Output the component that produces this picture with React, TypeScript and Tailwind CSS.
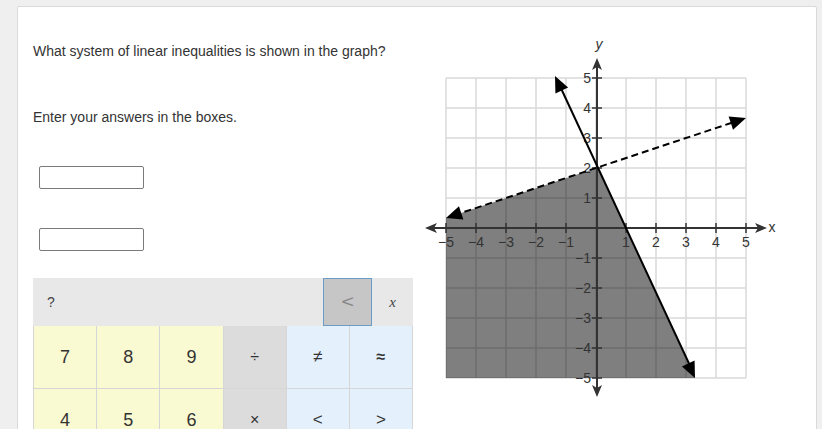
import React from "react";

const font = { fontFamily: '"Liberation Sans", Arial, sans-serif' };

// triangle arrowhead pointing at (tx, ty), coming from (fx, fy)
const head = (tx: number, ty: number, fx: number, fy: number, len: number, half: number, notch = 0) => {
  const dx = tx - fx;
  const dy = ty - fy;
  const d = Math.hypot(dx, dy);
  const ux = dx / d;
  const uy = dy / d;
  const bx = tx - ux * len;
  const by = ty - uy * len;
  const px = -uy;
  const py = ux;
  const nx = tx - ux * (len - notch);
  const ny = ty - uy * (len - notch);
  return `${tx},${ty} ${bx + px * half},${by + py * half} ${nx},${ny} ${bx - px * half},${by - py * half}`;
};

const Graph = () => {
  const xs = Array.from({ length: 11 }, (_, i) => 446 + i * 30);
  const ys = Array.from({ length: 11 }, (_, i) => 78 + i * 30);
  const ticks = [-5, -4, -3, -2, -1, 1, 2, 3, 4, 5];
  return (
    <svg width={380} height={399} viewBox="420 30 380 399" className="block" style={font}>
      {xs.map((x) => (
        <line key={"gx" + x} x1={x} y1={78} x2={x} y2={378} stroke="#d9d9d9" strokeWidth={1.5} />
      ))}
      {ys.map((y) => (
        <line key={"gy" + y} x1={446} y1={y} x2={746} y2={y} stroke="#d9d9d9" strokeWidth={1.5} />
      ))}
      <polygon points="446,218 598,167.5 695,378 446,378" fill="#000" fillOpacity={0.5} />

      {/* axes */}
      <line x1={432} y1={228} x2={760} y2={228} stroke="#333" strokeWidth={2} />
      <line x1={597} y1={64} x2={597} y2={391} stroke="#333" strokeWidth={2} />
      <polygon points={head(425, 228, 440, 228, 12, 5, 3)} fill="#333" />
      <polygon points={head(767, 228, 750, 228, 12, 5, 3)} fill="#333" />
      <polygon points={head(597, 58, 597, 75, 12, 5, 3)} fill="#333" />
      <polygon points={head(597, 397, 597, 380, 12, 5, 3)} fill="#333" />

      {ticks.map((t) => (
        <g key={"t" + t}>
          <line x1={596 + t * 30} y1={223} x2={596 + t * 30} y2={233} stroke="#333" strokeWidth={1.5} />
          <text x={596 + t * 30} y={247} fontSize={14} fill="#333" textAnchor="middle">
            {t < 0 ? "\u2212" + -t : t}
          </text>
          <line x1={592} y1={228 - t * 30} x2={602} y2={228 - t * 30} stroke="#333" strokeWidth={1.5} />
          <text x={591} y={228 - t * 30 + 5} fontSize={14} fill="#333" textAnchor="end">
            {t < 0 ? "\u2212" + -t : t}
          </text>
        </g>
      ))}
      <text x={599} y={49} fontSize={14} fill="#333" textAnchor="middle" fontStyle="italic">
        y
      </text>
      <text x={772} y={232} fontSize={14} fill="#333" textAnchor="middle">
        x
      </text>

      {/* solid boundary */}
      <line x1={559} y1={84} x2={692} y2={370} stroke="#000" strokeWidth={2} />
      <polygon points={head(555, 76, 562, 91, 16, 7)} fill="#000" />
      <polygon points={head(695, 378, 688, 363, 16, 7)} fill="#000" />

      {/* dashed boundary */}
      <line x1={454} y1={215.3} x2={738} y2={120.7} stroke="#000" strokeWidth={2} strokeDasharray="7 4" />
      <polygon points={head(446, 218, 461, 213, 16, 7)} fill="#000" />
      <polygon points={head(746, 118, 731, 123, 16, 7)} fill="#000" />
    </svg>
  );
};

const Cell = ({ children, className }: { children: React.ReactNode; className: string }) => (
  <div className={`h-[63px] flex items-center justify-center border-r border-b border-[#d6d6d6] text-[#333] ${className}`}>
    {children}
  </div>
);

export default function App() {
  return (
    <div className="min-h-screen bg-[#efefef] pl-[17px] pt-[6px] overflow-hidden" style={font}>
      <div className="w-[800px] h-[440px] bg-white border border-[#dadada] rounded-[2px] flex items-start">
        <div className="w-[380px] ml-[15px] pt-[36px] shrink-0">
          <p className="text-[14px] leading-[16px] text-[#333]">What system of linear inequalities is shown in the graph?</p>
          <p className="mt-[50px] text-[14px] leading-[16px] text-[#333]">Enter your answers in the boxes.</p>
          <div className="mt-[41px] ml-[6px] w-[105px] h-[23px] border border-[#7a7a7a] rounded-[2px]" />
          <div className="mt-[39px] ml-[6px] w-[105px] h-[23px] border border-[#7a7a7a] rounded-[2px]" />
          <div className="mt-[27px] w-[380px]">
            <div className="h-[48px] bg-[#e8e8e8] flex items-center">
              <span className="ml-[14px] text-[14px] text-[#444] flex-1">?</span>
              <div className="w-[49px] h-[48px] bg-[#c6c6c6] border border-[#6b9cc6] flex items-center justify-center text-[17px] text-[#888]" style={{ fontFamily: '"DejaVu Serif", serif' }}>
                &lt;
              </div>
              <div className="w-[41px] flex items-center justify-center text-[15px] text-[#444] italic" style={{ fontFamily: '"Liberation Serif", serif' }}>
                x
              </div>
            </div>
            <div className="grid grid-cols-6 border-l border-[#d6d6d6]">
              <Cell className="bg-[#fafad2] text-[18px]">7</Cell>
              <Cell className="bg-[#fafad2] text-[18px]">8</Cell>
              <Cell className="bg-[#fafad2] text-[18px]">9</Cell>
              <Cell className="bg-[#dcdcdc] text-[16px]">÷</Cell>
              <Cell className="bg-[#e4f0fb] text-[17px]">≠</Cell>
              <Cell className="bg-[#e4f0fb] text-[16px] font-bold">≈</Cell>
              <Cell className="bg-[#fafad2] text-[18px]">4</Cell>
              <Cell className="bg-[#fafad2] text-[18px]">5</Cell>
              <Cell className="bg-[#fafad2] text-[18px]">6</Cell>
              <Cell className="bg-[#dcdcdc] text-[16px]">×</Cell>
              <Cell className="bg-[#e4f0fb] text-[17px]">&lt;</Cell>
              <Cell className="bg-[#e4f0fb] text-[17px]">&gt;</Cell>
            </div>
          </div>
        </div>
        <div className="ml-[7px] mt-[23px]">
          <Graph />
        </div>
      </div>
    </div>
  );
}
